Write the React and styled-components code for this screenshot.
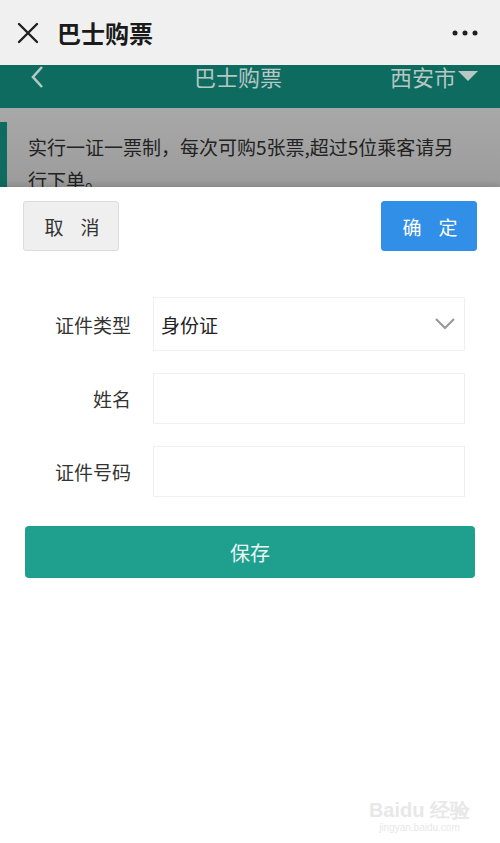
import React from "react";
import styled, { createGlobalStyle } from "styled-components";

const GlobalStyle = createGlobalStyle`
  * { box-sizing: border-box; }
  body {
    margin: 0;
    font-family: "Noto Sans CJK SC", "Noto Sans", sans-serif;
    background: #fff;
  }
`;

const Page = styled.div`
  position: relative;
  width: 500px;
  height: 843px;
  display: flex;
  flex-direction: column;
  overflow: hidden;
`;

const TopBar = styled.div`
  height: 65px;
  flex-shrink: 0;
  background: #f0f0f0;
  display: flex;
  align-items: center;
  padding: 0 22px 0 16px;
  gap: 17px;
`;

const TopTitle = styled.div`
  flex: 1;
  font-size: 24px;
  font-weight: 700;
  color: #1a1a1a;
  line-height: 1;
`;

const Header = styled.div`
  height: 43px;
  flex-shrink: 0;
  background: #0d6b60;
  display: grid;
  grid-template-columns: 104px 1fr 136px;
  align-items: start;
  padding: 1px 22px 0 30px;
  color: #b7c7c4;
  font-size: 22px;
  line-height: 20px;
`;

const HeaderTitle = styled.div`
  text-align: center;
`;

const City = styled.div`
  justify-self: end;
  display: flex;
  align-items: center;
  gap: 2px;
`;

const Notice = styled.div`
  height: 79px;
  flex-shrink: 0;
  background: linear-gradient(#a8a8a8, #9c9c9c);
  padding-top: 14px;
  overflow: hidden;
`;

const NoticeBox = styled.div`
  border-left: 7px solid #0d6b60;
  padding: 8px 32px 8px 21px;
  font-size: 19px;
  line-height: 33px;
  color: #222;
`;

const Sheet = styled.div`
  flex: 1;
  background: #fff;
  box-shadow: 0 -2px 6px rgba(0, 0, 0, 0.15);
  padding: 14px 23px 0;
`;

const ButtonRow = styled.div`
  display: flex;
  justify-content: space-between;
`;

const SheetButton = styled.button`
  width: 96px;
  height: 50px;
  border-radius: 3px;
  font-family: inherit;
  font-size: 19px;
  letter-spacing: 17px;
  padding: 0 0 0 19px;
  border: 1px solid ${(p) => (p.$primary ? "#318fe8" : "#dcdcdc")};
  background: ${(p) => (p.$primary ? "#318fe8" : "#efefef")};
  color: ${(p) => (p.$primary ? "#fff" : "#333")};
`;

const Form = styled.div`
  margin-top: 46px;
  display: flex;
  flex-direction: column;
  gap: 22px;
`;

const Row = styled.div`
  display: grid;
  grid-template-columns: 108px 312px;
  column-gap: 22px;
  align-items: center;
`;

const Label = styled.div`
  text-align: right;
  font-size: 19px;
  color: #333;
`;

const Field = styled.div`
  height: ${(p) => p.$h}px;
  border: 1px solid #f0f0f0;
  background: #fff;
  display: flex;
  align-items: center;
  justify-content: space-between;
  padding: 0 8px 0 7px;
  font-size: 19px;
  color: #222;
`;

const SaveButton = styled.button`
  display: block;
  width: 450px;
  height: 52px;
  margin: 29px 0 0 2px;
  border: none;
  border-radius: 4px;
  background: #1fa08f;
  color: #e9f6f4;
  font-family: inherit;
  font-size: 20px;
`;

const Watermark = styled.div`
  position: absolute;
  right: 30px;
  bottom: 10px;
  color: #e8e8e8;
  font-family: "Liberation Sans", sans-serif;
  text-align: center;
  display: flex;
  flex-direction: column;
  gap: 3px;
`;

const MarkLogo = styled.div`
  font-size: 20px;
  line-height: 20px;
  font-weight: 700;
`;

const MarkUrl = styled.div`
  font-size: 10px;
  line-height: 10px;
`;

const CloseIcon = () => (
  <svg width="24" height="24" viewBox="0 0 24 24">
    <path d="M3 3 L21 21 M21 3 L3 21" stroke="#1f1f1f" strokeWidth="2.4" strokeLinecap="round" />
  </svg>
);

const MoreIcon = () => (
  <svg width="26" height="6" viewBox="0 0 26 6">
    <circle cx="3" cy="3" r="2.5" fill="#1f1f1f" />
    <circle cx="13" cy="3" r="2.5" fill="#1f1f1f" />
    <circle cx="23" cy="3" r="2.5" fill="#1f1f1f" />
  </svg>
);

const BackIcon = () => (
  <svg width="14" height="22" viewBox="0 0 14 22">
    <path d="M12 1 L3 11 L12 21" stroke="#b7c7c4" strokeWidth="2.6" fill="none" />
  </svg>
);

const Caret = () => (
  <svg width="20" height="12" viewBox="0 0 20 12">
    <path d="M0 1 L20 1 L10 11 Z" fill="#b7c7c4" />
  </svg>
);

const Chevron = () => (
  <svg width="22" height="14" viewBox="0 0 22 14">
    <path d="M2 2 L11 11 L20 2" stroke="#9a9a9a" strokeWidth="2.2" fill="none" />
  </svg>
);

export default function App() {
  return (
    <Page>
      <GlobalStyle />
      <TopBar>
        <CloseIcon />
        <TopTitle>巴士购票</TopTitle>
        <MoreIcon />
      </TopBar>
      <Header>
        <BackIcon />
        <HeaderTitle>巴士购票</HeaderTitle>
        <City>
          西安市
          <Caret />
        </City>
      </Header>
      <Notice>
        <NoticeBox>实行一证一票制，每次可购5张票,超过5位乘客请另行下单。</NoticeBox>
      </Notice>
      <Sheet>
        <ButtonRow>
          <SheetButton>取消</SheetButton>
          <SheetButton $primary>确定</SheetButton>
        </ButtonRow>
        <Form>
          <Row>
            <Label>证件类型</Label>
            <Field $h={54}>
              身份证
              <Chevron />
            </Field>
          </Row>
          <Row>
            <Label>姓名</Label>
            <Field $h={51} />
          </Row>
          <Row>
            <Label>证件号码</Label>
            <Field $h={51} />
          </Row>
        </Form>
        <SaveButton>保存</SaveButton>
      </Sheet>
      <Watermark>
        <MarkLogo>Baidu 经验</MarkLogo>
        <MarkUrl>jingyan.baidu.com</MarkUrl>
      </Watermark>
    </Page>
  );
}
